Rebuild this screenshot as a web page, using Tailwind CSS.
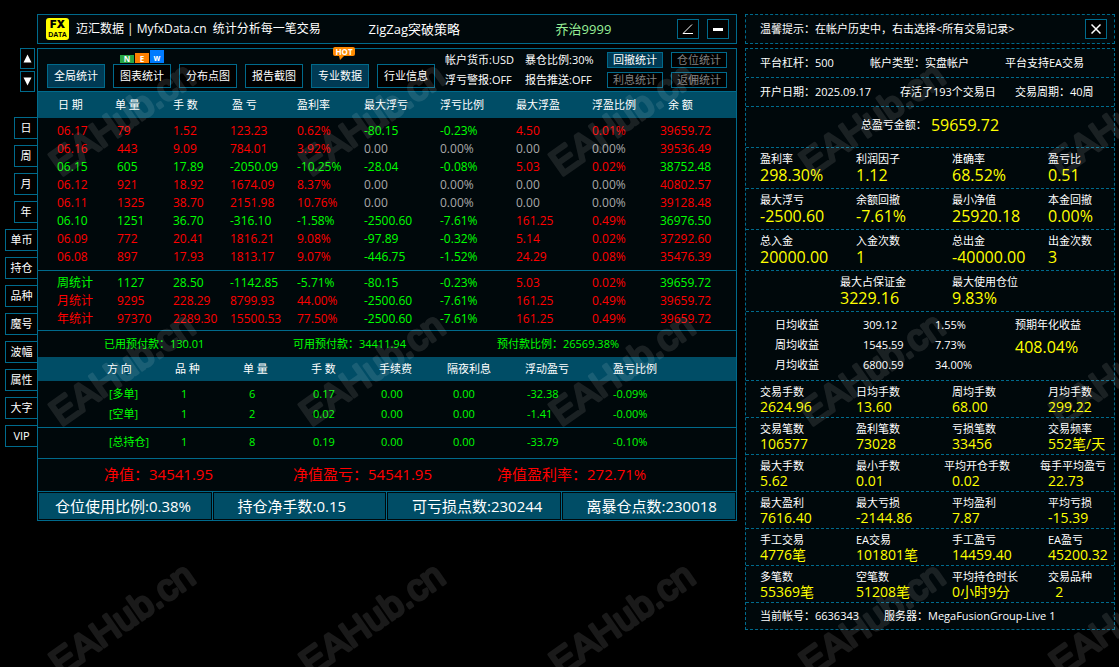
<!DOCTYPE html>
<html lang="zh-CN">
<head>
  <meta charset="UTF-8" />
  <meta name="viewport" content="width=device-width, initial-scale=1.0" />
  <title>迈汇数据 | MyfxData.cn</title>
  <script src="https://cdn.jsdelivr.net/npm/@tailwindcss/browser@4"></script>
</head>
<body class="min-h-screen bg-black text-white text-[11px] leading-4 whitespace-nowrap font-['Open_Sans','Noto_Sans_CJK_SC',sans-serif]">

  <div class="grid grid-cols-[32px_minmax(0,700fr)_minmax(0,378fr)] items-start pt-[14px] pl-[5px] pr-1">

    <!-- 左侧标签 -->
    <nav class="flex flex-col items-end pt-[34px]">
      <div class="flex flex-col gap-0.5 pr-0.5 mb-[25px]">
        <button aria-label="向上" class="w-[15px] h-[21px] border border-[#006a8c] flex items-center justify-center">
          <svg width="9" height="9" viewBox="0 0 9 9" fill="#fff"><path d="M4.5 0.5 8.5 8.5H0.5z" /></svg>
        </button>
        <button aria-label="向下" class="w-[15px] h-[21px] border border-[#006a8c] flex items-center justify-center">
          <svg width="9" height="9" viewBox="0 0 9 9" fill="#fff"><path d="M4.5 8.5 8.5 0.5H0.5z" /></svg>
        </button>
      </div>
      <div id="tabs" class="flex flex-col items-end gap-1.5"></div>
    </nav>

    <!-- 主面板 -->
    <main>
      <header class="h-[30px] border border-[#006a8c] bg-[#00080b] flex items-center pl-2 pr-[7px]">
        <div class="w-[23px] h-[22px] pt-px rounded-[3px] bg-[#ff0] text-black text-center">
          <div class="font-['Inter'] text-[11px] leading-[11px] font-black">FX</div>
          <div class="font-['Liberation_Sans'] text-[7px] leading-[9px] font-bold">DATA</div>
        </div>
        <h1 class="grow-[147] basis-0 pl-[7px] text-[12px]">迈汇数据 | MyfxData.cn&nbsp; 统计分析每一笔交易</h1>
        <div class="grow-[94] basis-0 text-[13px]">ZigZag突破策略</div>
        <div class="grow-[61] basis-0 text-[13px] text-[#98f098]">乔治9999</div>
        <div class="flex gap-2">
          <button aria-label="角度" class="w-[22px] h-5 border border-[#006a8c] bg-black flex items-center justify-center">
            <svg width="12" height="12" viewBox="0 0 12 12" fill="none" stroke="#fff"><path d="M10 1.5 1 10.5H11" /></svg>
          </button>
          <button aria-label="最小化" class="w-[22px] h-5 border border-[#006a8c] bg-black flex items-center justify-center">
            <svg width="10" height="3" viewBox="0 0 10 3"><path d="M0 0H10V3H0z" fill="#fff" /></svg>
          </button>
        </div>
      </header>

      <section class="mt-1 border border-[#006a8c] bg-[#00080b]">
        <!-- 工具栏 -->
        <div class="h-[42px] flex justify-between pl-[9px] pr-[9px]">
          <div class="flex items-end gap-2 pb-[3px]">
            <button class="w-[58px] h-6 border border-[#006a8c] bg-[#003a54]">全局统计</button>
            <button class="relative w-[58px] h-6 border border-[#006a8c] bg-black">图表统计
              <span class="absolute left-1.5 bottom-full mb-0.5 flex items-end gap-px text-[8px] leading-2 font-bold">
                <span class="w-[14px] h-2 bg-[#28a745]">N</span>
                <span class="w-[14px] h-[10px] pt-0.5 bg-[#ff7f00]">E</span>
                <span class="w-[14px] h-[13px] pt-1 bg-[#007bff]">w</span>
              </span>
            </button>
            <button class="w-[58px] h-6 border border-[#006a8c] bg-black">分布点图</button>
            <button class="w-[58px] h-6 border border-[#006a8c] bg-black">报告截图</button>
            <button class="relative w-[58px] h-6 border border-[#006a8c] bg-[#003a54]">专业数据
              <span class="absolute left-[21px] -top-[18px] w-[22px] h-[9px] rounded-[2px] bg-[#ff8a00] text-[8px] leading-[9px] font-bold text-center">HOT
                <svg class="absolute left-1.5 top-[9px]" width="5" height="4" viewBox="0 0 5 4"><path d="M0 0H5L1 4z" fill="#ff8a00" /></svg>
              </span>
            </button>
            <button class="w-[58px] h-6 border border-[#006a8c] bg-black">行业信息</button>
          </div>
          <div class="grid grid-cols-[80px_82px_64px_56px] grid-rows-2 gap-y-1 pt-[3px] pb-[3px] leading-4">
            <span>帐户货币:USD</span>
            <span>暴仓比例:30%</span>
            <button class="w-14 h-4 leading-[14px] border border-[#006a8c] bg-[#003a54]">回撤统计</button>
            <button class="w-14 h-4 leading-[14px] border border-[#006a8c] bg-black text-[#808080]">仓位统计</button>
            <span>浮亏警报:OFF</span>
            <span>报告推送:OFF</span>
            <button class="w-14 h-4 leading-[14px] border border-[#006a8c] bg-black text-[#808080]">利息统计</button>
            <button class="w-14 h-4 leading-[14px] border border-[#006a8c] bg-black text-[#808080]">返佣统计</button>
          </div>
        </div>

        <!-- 每日统计 -->
        <table class="w-full table-fixed text-left">
          <colgroup>
            <col class="w-[67px]" /><col class="w-[56px]" /><col class="w-[57px]" /><col class="w-[67px]" /><col class="w-[67px]" />
            <col class="w-[76px]" /><col class="w-[76px]" /><col class="w-[76px]" /><col class="w-[68px]" /><col class="w-[88px]" />
          </colgroup>
          <thead>
            <tr class="h-[26px] bg-[#004d66] border-t border-[#006a8c] [&>th]:font-normal [&>th]:pl-3">
              <th class="pl-5!">日 期</th><th class="pl-2.5!">单 量</th><th>手 数</th><th class="pl-[14px]!">盈 亏</th><th>盈利率</th>
              <th>最大浮亏</th><th>浮亏比例</th><th>最大浮盈</th><th>浮盈比例</th><th class="pl-5!">余 额</th>
            </tr>
          </thead>
          <tbody id="daily" class="text-[12px] leading-[18px] [&>tr:first-child]:h-[22px] [&>tr:last-child]:h-[23px]"></tbody>
          <tbody id="summary" class="text-[12px] leading-[18px] border-t border-[#006a8c] [&>tr:first-child]:h-[21px] [&>tr:last-child]:h-5"></tbody>
        </table>

        <!-- 预付款 -->
        <div class="h-[27px] border-t border-[#006a8c] grid grid-cols-[189fr_204fr_239fr] items-center pl-[66px] text-[#0f0]">
          <span>已用预付款：130.01</span>
          <span>可用预付款：34411.94</span>
          <span>预付款比例：26569.38%</span>
        </div>

        <!-- 持仓 -->
        <table class="w-full table-fixed text-left">
          <colgroup>
            <col class="w-[137px]" /><col class="w-[68px]" /><col class="w-[68px]" /><col class="w-[68px]" />
            <col class="w-[68px]" /><col class="w-[78px]" /><col class="w-[88px]" /><col class="w-[123px]" />
          </colgroup>
          <thead>
            <tr class="h-6 bg-[#004d66] [&>th]:font-normal">
              <th class="pl-[69px]">方 向</th><th>品 种</th><th>单 量</th><th>手 数</th>
              <th>手续费</th><th>隔夜利息</th><th>浮动盈亏</th><th>盈亏比例</th>
            </tr>
          </thead>
          <tbody id="positions" class="text-[#0f0] leading-5 [&>tr:first-child]:h-[23px] [&>tr:last-child]:h-6"></tbody>
          <tbody id="positionTotal" class="text-[#0f0] leading-7 border-y border-[#006a8c] [&>tr]:h-[31px]"></tbody>
        </table>

        <!-- 净值 -->
        <div class="h-8 grid grid-cols-[189fr_204fr_239fr] items-center pl-[66px] pb-0.5 text-[15px] text-[#f00]">
          <span>净值：34541.95</span>
          <span>净值盈亏：54541.95</span>
          <span>净值盈利率：272.71%</span>
        </div>
        <div class="h-[29px] border-t border-[#006a8c] grid grid-cols-4 divide-x divide-[#006a8c] text-[15px] leading-[26px]">
          <div class="p-px"><div class="h-full bg-[#004d66] pl-4">仓位使用比例:0.38%</div></div>
          <div class="p-px"><div class="h-full bg-[#004d66] pl-6">持仓净手数:0.15</div></div>
          <div class="p-px"><div class="h-full bg-[#004d66] pl-6">可亏损点数:230244</div></div>
          <div class="p-px"><div class="h-full bg-[#004d66] pl-6">离暴仓点数:230018</div></div>
        </div>
      </section>
    </main>

    <!-- 右侧信息 -->
    <aside class="pl-2">
      <div class="h-[30px] border border-dashed border-[#006a8c] bg-[#00080b] flex items-center justify-between pl-[14px] pr-[7px]">
        <p>温馨提示：在帐户历史中，右击选择&lt;所有交易记录&gt;</p>
        <button aria-label="关闭" class="w-[22px] h-5 border border-[#006a8c] bg-black flex items-center justify-center">
          <svg width="10" height="10" viewBox="0 0 10 10" fill="none" stroke="#fff" stroke-width="1.5"><path d="M0.5 0.5 9.5 9.5M9.5 0.5 0.5 9.5" /></svg>
        </button>
      </div>

      <section class="mt-1 border border-dashed border-[#006a8c] bg-[#00080b] divide-y divide-dashed divide-[#006a8c]">
        <div class="h-[29px] grid grid-cols-[110fr_135fr_109fr] items-center pl-[14px]">
          <span>平台杠杆：500</span><span>帐户类型：实盘帐户</span><span>平台支持EA交易</span>
        </div>
        <div class="h-[29px] grid grid-cols-[140fr_115fr_99fr] items-center pl-[14px]">
          <span>开户日期：2025.09.17</span><span>存活了193个交易日</span><span>交易周期：40周</span>
        </div>
        <div class="h-[41px] flex items-center justify-center gap-1 pb-1">
          <span>总盈亏金额：</span><span class="text-[16px] text-[#ff0]">59659.72</span>
        </div>
        <div id="statsTop" class="divide-y divide-dashed divide-[#006a8c]"></div>
        <div class="h-[41px] grid grid-cols-[112fr_162fr] pl-[94px] pt-[3px]">
          <div>最大占保证金<div class="text-[16px] text-[#ff0]">3229.16</div></div>
          <div>最大使用仓位<div class="text-[16px] text-[#ff0]">9.83%</div></div>
        </div>
        <div class="h-[69px] grid grid-cols-[240fr_99fr] pl-[29px] pt-[3px]">
          <table class="w-full table-fixed text-left self-start leading-5">
            <colgroup><col class="w-[88px]" /><col class="w-[72px]" /><col class="w-[80px]" /></colgroup>
            <tbody>
              <tr><th class="font-normal">日均收益</th><td>309.12</td><td>1.55%</td></tr>
              <tr><th class="font-normal">周均收益</th><td>1545.59</td><td>7.73%</td></tr>
              <tr><th class="font-normal">月均收益</th><td>6800.59</td><td>34.00%</td></tr>
            </tbody>
          </table>
          <div class="leading-5">预期年化收益<div class="text-[16px] leading-6 text-[#ff0]">408.04%</div></div>
        </div>
        <div id="statsBottom" class="divide-y divide-dashed divide-[#006a8c]"></div>
        <div class="h-[26px] grid grid-cols-[124fr_230fr] items-center pl-[14px]">
          <span>当前帐号：6636343</span><span>服务器：MegaFusionGroup-Live 1</span>
        </div>
      </section>
    </aside>
  </div>

  <!-- 水印 -->
  <svg class="fixed inset-0 w-full h-full pointer-events-none opacity-10" aria-hidden="true">
    <defs>
      <pattern id="mark" width="250" height="250" patternUnits="userSpaceOnUse">
        <text transform="translate(61 177) rotate(-35)" font-family="Liberation Sans, sans-serif" font-size="37" fill="#fff" stroke="#fff" stroke-width="3" stroke-linejoin="round">EAHub.cn</text>
      </pattern>
    </defs>
    <rect width="100%" height="100%" fill="url(#mark)" />
  </svg>

  <script>
    const R = "text-[#f00]", G = "text-[#0f0]", N = "text-[#a9a9a9]";

    const tabs = ["日", "周", "月", "年", "单币", "持仓", "品种", "魔号", "波幅", "属性", "大字", "VIP"];

    const daily = [
      ["06.17", "79", "1.52", "123.23", "0.62%", "-80.15", "-0.23%", "4.50", "0.01%", "39659.72"],
      ["06.16", "443", "9.09", "784.01", "3.92%", "0.00", "0.00%", "0.00", "0.00%", "39536.49"],
      ["06.15", "605", "17.89", "-2050.09", "-10.25%", "-28.04", "-0.08%", "5.03", "0.02%", "38752.48"],
      ["06.12", "921", "18.92", "1674.09", "8.37%", "0.00", "0.00%", "0.00", "0.00%", "40802.57"],
      ["06.11", "1325", "38.70", "2151.98", "10.76%", "0.00", "0.00%", "0.00", "0.00%", "39128.48"],
      ["06.10", "1251", "36.70", "-316.10", "-1.58%", "-2500.60", "-7.61%", "161.25", "0.49%", "36976.50"],
      ["06.09", "772", "20.41", "1816.21", "9.08%", "-97.89", "-0.32%", "5.14", "0.02%", "37292.60"],
      ["06.08", "897", "17.93", "1813.17", "9.07%", "-446.75", "-1.52%", "24.29", "0.08%", "35476.39"]
    ];
    const summary = [
      ["周统计", "1127", "28.50", "-1142.85", "-5.71%", "-80.15", "-0.23%", "5.03", "0.02%", "39659.72"],
      ["月统计", "9295", "228.29", "8799.93", "44.00%", "-2500.60", "-7.61%", "161.25", "0.49%", "39659.72"],
      ["年统计", "97370", "2289.30", "15500.53", "77.50%", "-2500.60", "-7.61%", "161.25", "0.49%", "39659.72"]
    ];

    const positions = [
      ["[多单]", "1", "6", "0.17", "0.00", "0.00", "-32.38", "-0.09%"],
      ["[空单]", "1", "2", "0.02", "0.00", "0.00", "-1.41", "-0.00%"]
    ];
    const positionTotal = [["[总持仓]", "1", "8", "0.19", "0.00", "0.00", "-33.79", "-0.10%"]];
    const positionPad = ["pl-[71px]", "pl-1.5", "pl-1.5", "pl-0.5", "pl-0.5", "pl-1.5", "pl-0.5", ""];

    const statsTop = [
      [["盈利率", "298.30%"], ["利润因子", "1.12"], ["准确率", "68.52%"], ["盈亏比", "0.51"]],
      [["最大浮亏", "-2500.60"], ["余额回撤", "-7.61%"], ["最小净值", "25920.18"], ["本金回撤", "0.00%"]],
      [["总入金", "20000.00"], ["入金次数", "1"], ["总出金", "-40000.00"], ["出金次数", "3"]]
    ];
    const statsBottom = [
      [["交易手数", "2624.96"], ["日均手数", "13.60"], ["周均手数", "68.00"], ["月均手数", "299.22"]],
      [["交易笔数", "106577"], ["盈利笔数", "73028"], ["亏损笔数", "33456"], ["交易频率", "552笔/天"]],
      [["最大手数", "5.62"], ["最小手数", "0.01"], ["平均开仓手数", "0.02"], ["每手平均盈亏", "22.73"]],
      [["最大盈利", "7616.40"], ["最大亏损", "-2144.86"], ["平均盈利", "7.87"], ["平均亏损", "-15.39"]],
      [["手工交易", "4776笔"], ["EA交易", "101801笔"], ["手工盈亏", "14459.40"], ["EA盈亏", "45200.32"]],
      [["多笔数", "55369笔"], ["空笔数", "51208笔"], ["平均持仓时长", "0小时9分"], ["交易品种", "&nbsp; 2"]]
    ];

    const put = (id, html) => { document.getElementById(id).innerHTML = html; };

    put("tabs", tabs.map(t =>
      `<button class="${t.length === 1 ? "w-[23px]" : "w-8"} h-[22px] border border-r-0 border-[#006a8c] bg-black">${t}</button>`
    ).join(""));

    // 亏损绿色，盈利红色，零值灰色
    function cellColor(row, i) {
      if (i >= 5 && i <= 8) {
        if (parseFloat(row[i]) === 0) return N;
        return i < 7 ? G : R;
      }
      return row[3].startsWith("-") ? G : R;
    }

    function statRows(rows) {
      return rows.map(row => `
        <tr class="h-[18px] first:align-bottom last:align-top">
          ${row.map((v, i) => `<td class="${i === 0 ? "pl-[19px]" : "pl-3"} ${cellColor(row, i)}">${v}</td>`).join("")}
        </tr>`).join("");
    }
    put("daily", statRows(daily));
    put("summary", statRows(summary));

    function positionRows(rows) {
      return rows.map(row => `
        <tr class="first:align-bottom last:align-top">
          ${row.map((v, i) => `<td class="${positionPad[i]}">${v}</td>`).join("")}
        </tr>`).join("");
    }
    put("positions", positionRows(positions));
    put("positionTotal", positionRows(positionTotal));

    function statGrid(rows, rowClass, valueClass) {
      return rows.map(row => `
        <div class="grid grid-cols-[minmax(0,96fr)_minmax(0,96fr)_minmax(0,96fr)_minmax(0,66fr)] pl-[14px] ${rowClass}">
          ${row.map(([k, v]) => `
            <div>
              <div class="${k === "平均开仓手数" || k === "每手平均盈亏" ? "-ml-2" : ""}">${k}</div>
              <div class="text-[#ff0] ${valueClass}">${v}</div>
            </div>`).join("")}
        </div>`).join("");
    }
    put("statsTop", statGrid(statsTop, "h-[41px] last:h-10 pt-[3px]", "text-[16px]"));
    put("statsBottom", statGrid(statsBottom, "h-[37px] last:h-9 pt-[3px]", "text-[14px] leading-[14px]"));
  </script>
</body>
</html>
